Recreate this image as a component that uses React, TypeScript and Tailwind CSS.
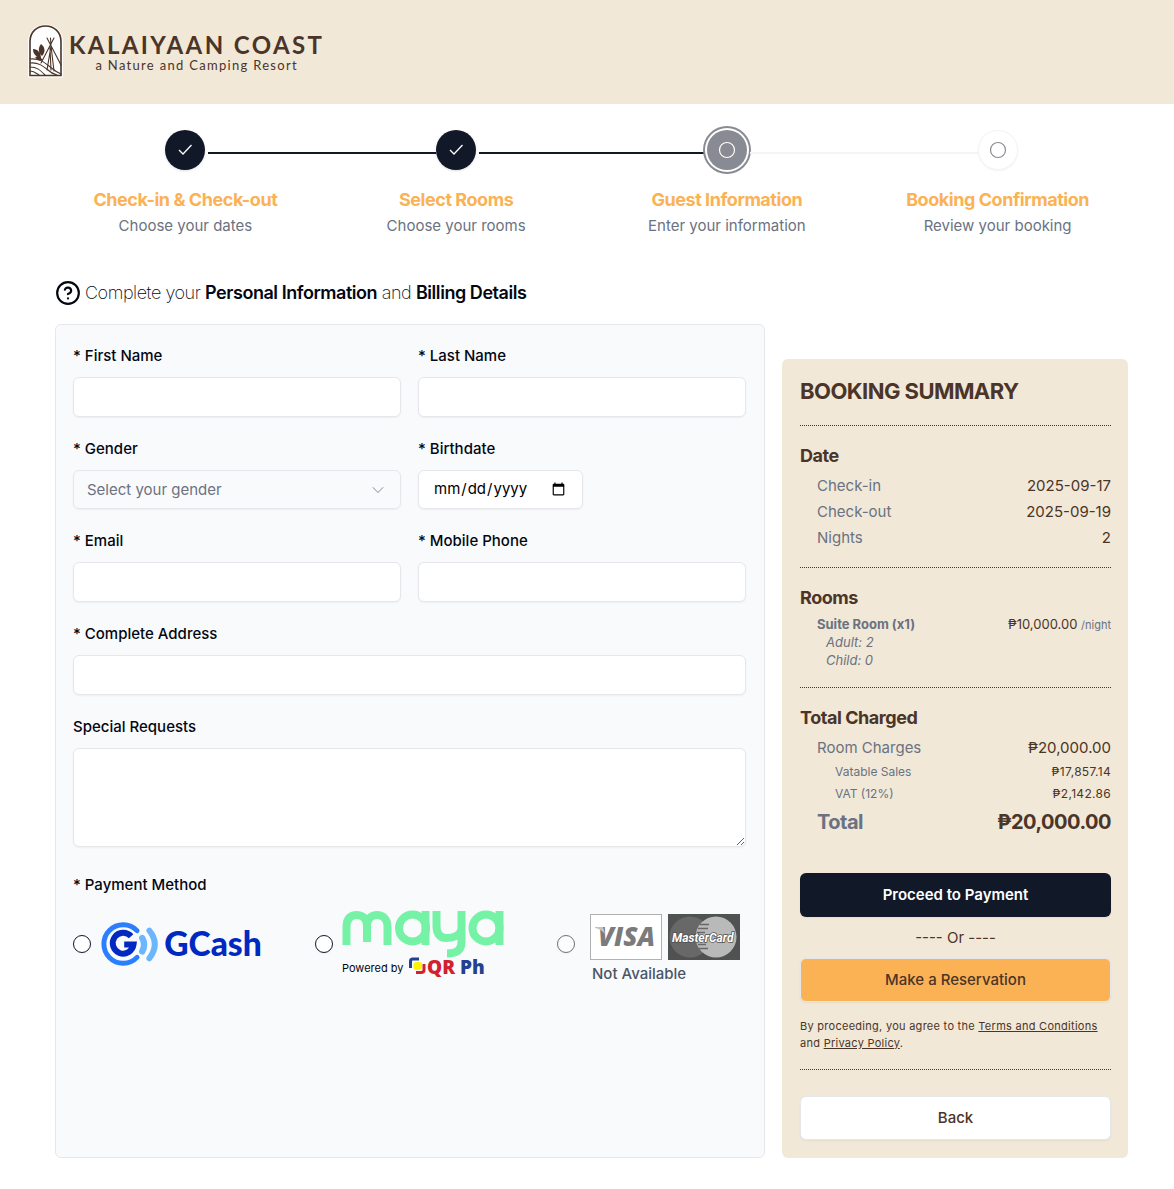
import React from "react";
import { ChevronDown, CircleHelp } from "lucide-react";

type StepState = "done" | "active" | "upcoming";

const steps: { title: string; description: string; state: StepState }[] = [
  { title: "Check-in & Check-out", description: "Choose your dates", state: "done" },
  { title: "Select Rooms", description: "Choose your rooms", state: "done" },
  { title: "Guest Information", description: "Enter your information", state: "active" },
  { title: "Booking Confirmation", description: "Review your booking", state: "upcoming" },
];

const circleStyles: Record<StepState, string> = {
  done: "bg-[#111827] text-white shadow-sm",
  active: "bg-[#888b93] text-white shadow-sm ring-2 ring-[#888b93] ring-offset-2",
  upcoming: "border border-gray-100 bg-white text-[#888b93] shadow-xs",
};

function ResortMark() {
  return (
    <svg width="36" height="54" viewBox="0 0 36 54" fill="none" aria-hidden="true">
      <path d="M0 53.500V17.500C0 7 8 .5 17.500 .5S35 7 35 17.500V53.500Z" fill="#fff" />
      <path d="M2 51.500V17.500C2 8 9 2 17.500 2S33 8 33 17.500V51.500Z" stroke="#4b3428" strokeWidth="1.600" />
      <g stroke="#4b3428" strokeWidth="1.100" strokeLinecap="round">
        <path d="M19 14 33 41M26 14 13 39M22.500 14 23 22 19 46M23 22 26 47M22 24 23 46" />
        <path d="M2 35c9-1 14 3 19 7s7 6 12 8M2 39c8-1 13 3 18 7 3 3 5 4 9 5M2 43c7 0 10 3 15 8M2 47c4 0 6 2 9 4" />
      </g>
      <path d="M13 20c4 3 5 8 1 12-4-4-4-8-1-12ZM5 25c5 0 8 4 8 9-5-1-8-4-8-9ZM7 33c3-1 6 0 8 3-4 1-6 0-8-3Z" fill="#4b3428" />
    </svg>
  );
}

function StepIcon({ state }: { state: StepState }) {
  return (
    <svg width="18" height="18" viewBox="0 0 18 18" fill="none" stroke="currentColor" aria-hidden="true">
      {state === "done" ? (
        <path d="M3 9 7 13 15.500 4" strokeWidth="1.300" />
      ) : (
        <circle cx="9" cy="9" r="7.500" strokeWidth="1.200" />
      )}
    </svg>
  );
}

function Stepper() {
  return (
    <ol className="grid grid-cols-4 pt-[26px] pr-[41px] pl-[50px] text-center">
      {steps.map((step, i) => (
        <li key={step.title} className="relative flex flex-col items-center">
          <button
            type="button"
            aria-label={step.title}
            className={`flex size-10 items-center justify-center rounded-full ${circleStyles[step.state]}`}
          >
            <StepIcon state={step.state} />
          </button>
          {i < steps.length - 1 && (
            <span
              className={`absolute top-[22px] right-[calc(-50%+20px)] left-[calc(50%+23px)] h-[2px] ${
                step.state === "done" ? "bg-[#111827]" : "bg-gray-100"
              }`}
            />
          )}
          <h2 className="mt-4 text-[18px] leading-7 font-bold tracking-tight text-[#fab255]">{step.title}</h2>
          <p className="text-[15px] leading-6 text-gray-500">{step.description}</p>
        </li>
      ))}
    </ol>
  );
}

const control = "h-10 w-full rounded-md border border-gray-200 bg-white px-[14px] text-[15px] shadow-xs";

function Field({ id, label, children }: { id: string; label: string; children: React.ReactNode }) {
  return (
    <div className="flex flex-col">
      <label htmlFor={id} className="mb-[7px] text-[15px] leading-7 font-medium text-gray-950">
        {label}
      </label>
      {children}
    </div>
  );
}

function GCashLogo() {
  return (
    <svg width="164" height="46" viewBox="0 0 164 46" fill="none" role="img" aria-label="GCash">
      <g strokeLinecap="round">
        <path d="M37.500 9.500A19.500 19.500 0 1 0 37.500 36.500" stroke="#2b7fff" strokeWidth="5" />
        <path d="M31.500 15.200A10.600 10.600 0 1 0 34 23.500H24.500" stroke="#0029c1" strokeWidth="6" strokeLinecap="butt" />
        <path d="M42.800 17Q46.500 23 42.800 30.500" stroke="#6cb6fb" strokeWidth="6.500" />
        <path d="M50 9.500Q61 23 50 37.500" stroke="#6cb6fb" strokeWidth="6" />
      </g>
      <text x="65" y="35" fontFamily="Lato, sans-serif" fontWeight="900" fontSize="34" fill="#0029c1">
        GCash
      </text>
    </svg>
  );
}

function MayaLogo() {
  return (
    <svg width="162" height="48" viewBox="0 0 162 48" fill="none" stroke="#75f2a6" strokeWidth="8" role="img" aria-label="maya">
      <path d="M4.500 35V17C4.500 8 9 5 14.500 5S25 8 25 16V32V16C25 8 30 5 35 5S45.500 8 45.500 17V35" />
      <circle cx="70.500" cy="18" r="13.500" />
      <path d="M83.500 1V35M94.500 1V16C94.500 25 99 28 104.500 28S119.500 26 119.500 18V1M119.500 14V32C119.500 40 115 43.500 105 43.500" />
      <circle cx="144" cy="18" r="13.500" />
      <path d="M157.500 1V35" />
    </svg>
  );
}

function QrPhLogo() {
  return (
    <svg width="80" height="28" viewBox="0 -4 80 28" fill="none" role="img" aria-label="QR Ph">
      <path d="M1.500 10V3Q1.500 1 4 1H10" stroke="#24418f" strokeWidth="3" />
      <path d="M15 6V12Q15 14.500 12 14.500H7" stroke="#d3202f" strokeWidth="3" />
      <rect x="4.500" y="4" width="8.500" height="8" rx="3" fill="#fff200" />
      <text x="18" y="16" fontFamily="Open Sans, sans-serif" fontWeight="800" fontSize="19" fill="#d3202f">QR</text>
      <text x="51" y="16" fontFamily="Open Sans, sans-serif" fontWeight="800" fontSize="19" fill="#24418f">Ph</text>
    </svg>
  );
}

function CardLogos() {
  return (
    <svg width="150" height="46" viewBox="0 0 150 46" role="img" aria-label="Visa and MasterCard">
      <rect x=".5" y=".5" width="71" height="45" fill="#fff" stroke="#b1b1b1" />
      <text x="8" y="32" fontFamily="Open Sans, sans-serif" fontWeight="800" fontStyle="italic" fontSize="26" fill="#7b7b7b">
        VISA
      </text>
      <path d="M5 13H13L15 20Q11 15 5 14Z" fill="#c4c4c4" />
      <rect x="78" width="72" height="46" fill="#505151" />
      <circle cx="100" cy="23" r="20.500" fill="#686868" />
      <circle cx="126" cy="23" r="20.500" fill="#b9b9b9" />
      <path d="M110 10.500H119M108 14.500H118M107 18.500H115M108 30.500H116M109 34.500H118" stroke="#686868" strokeWidth="1.500" />
      <text x="82" y="28" fontFamily="Roboto, sans-serif" fontWeight="700" fontStyle="italic" fontSize="12" fill="#fff" stroke="#505151" strokeWidth="1.500" paintOrder="stroke">
        MasterCard
      </text>
    </svg>
  );
}

const radio =
  "size-[18px] shrink-0 appearance-none rounded-full border border-gray-900 bg-white shadow-xs checked:border-[6px] disabled:opacity-60";

function GuestForm() {
  return (
    <form className="rounded-md border border-gray-200 bg-[#f9fafc] py-[17px] pr-[18px] pl-[17px]">
      <div className="grid grid-cols-2 gap-x-[17px] gap-y-[18px]">
        <Field id="first-name" label="* First Name">
          <input id="first-name" type="text" className={control} />
        </Field>
        <Field id="last-name" label="* Last Name">
          <input id="last-name" type="text" className={control} />
        </Field>
        <Field id="gender" label="* Gender">
          <div className="relative">
            <select
              id="gender"
              defaultValue=""
              className="block h-[39px] w-full appearance-none rounded-md border border-gray-200 bg-transparent px-[13px] pt-[2px] text-[15px] text-gray-500 shadow-xs"
            >
              <option value="">Select your gender</option>
              <option>Male</option>
              <option>Female</option>
            </select>
            <ChevronDown className="pointer-events-none absolute top-[10px] right-[13px] size-5 text-gray-400" strokeWidth={1.25} />
          </div>
        </Field>
        <Field id="birthdate" label="* Birthdate">
          <input
            id="birthdate"
            type="date"
            className="h-[39px] w-[165px] rounded-md border border-gray-200 bg-white px-[14px] text-[15px] text-black shadow-xs"
          />
        </Field>
        <Field id="email" label="* Email">
          <input id="email" type="email" className={control} />
        </Field>
        <Field id="phone" label="* Mobile Phone">
          <input id="phone" type="tel" className={control} />
        </Field>
        <div className="col-span-2">
          <Field id="address" label="* Complete Address">
            <input id="address" type="text" className={control} />
          </Field>
        </div>
        <div className="col-span-2">
          <Field id="requests" label="Special Requests">
            <textarea id="requests" className="h-[99px] w-full rounded-md border border-gray-200 bg-white p-3 text-[15px] shadow-xs" />
          </Field>
        </div>
      </div>

      <fieldset className="mt-6">
        <legend className="text-[15px] leading-7 font-medium text-gray-950">* Payment Method</legend>
        <div className="mt-[10px] grid grid-cols-3 gap-[53px]">
          <label className="flex h-[70px] items-center gap-[9px]">
            <input type="radio" name="payment" value="gcash" className={radio} />
            <GCashLogo />
          </label>
          <label className="flex h-[70px] items-center gap-[9px]">
            <input type="radio" name="payment" value="maya" className={radio} />
            <span className="flex flex-col">
              <MayaLogo />
              <span className="flex h-5 items-center gap-[6px] text-[11px] text-gray-950">
                Powered by <QrPhLogo />
              </span>
            </span>
          </label>
          <label className="flex h-[70px] items-center gap-[15px]">
            <input type="radio" name="payment" value="card" disabled className={radio} />
            <span className="flex flex-col pt-3">
              <CardLogos />
              <span className="pt-[2px] pl-[2px] text-[15px] leading-6 font-medium text-gray-600">Not Available</span>
            </span>
          </label>
        </div>
      </fieldset>
    </form>
  );
}

function Row({ label, value }: { label: string; value: string }) {
  return (
    <div className="flex justify-between pl-[17px] text-[15px] leading-[26px]">
      <dt className="text-gray-500">{label}</dt>
      <dd>{value}</dd>
    </div>
  );
}

function SmallRow({ label, value }: { label: string; value: string }) {
  return (
    <div className="flex justify-between pl-[35px] text-[12px] leading-[22px]">
      <dt className="text-gray-500">{label}</dt>
      <dd className="tracking-wide">{value}</dd>
    </div>
  );
}

const sectionTitle = "mb-[3px] text-[18px] leading-7 font-bold tracking-tight";
const rule = "my-4 border-t border-dotted border-[#4b3428]";

function BookingSummary() {
  return (
    <aside className="mt-[35px] flex flex-col rounded-md bg-[#f1e8d7] py-[18px] pr-[17px] pl-[18px] text-[#4b3428]">
      <h2 className="mb-1 text-[22px] leading-7 font-bold tracking-tight">BOOKING SUMMARY</h2>
      <hr className={rule} />
      <h3 className={sectionTitle}>Date</h3>
      <dl>
        <Row label="Check-in" value="2025-09-17" />
        <Row label="Check-out" value="2025-09-19" />
        <Row label="Nights" value="2" />
      </dl>
      <hr className={rule} />
      <h3 className={sectionTitle}>Rooms</h3>
      <div className="flex justify-between pb-[2px] pl-[17px] text-[13px] leading-[18px]">
        <div className="text-gray-500">
          <h4 className="font-bold">Suite Room (x1)</h4>
          <ul className="pl-[9px] italic">
            <li>Adult: 2</li>
            <li>Child: 0</li>
          </ul>
        </div>
        <p>
          ₱10,000.00 <span className="text-[11px] text-gray-500">/night</span>
        </p>
      </div>
      <hr className={rule} />
      <h3 className={sectionTitle}>Total Charged</h3>
      <dl>
        <Row label="Room Charges" value="₱20,000.00" />
        <SmallRow label="Vatable Sales" value="₱17,857.14" />
        <SmallRow label="VAT (12%)" value="₱2,142.86" />
        <div className="flex justify-between pl-[17px] text-[20px] leading-[34px] font-bold tracking-tight">
          <dt className="text-gray-500">Total</dt>
          <dd>₱20,000.00</dd>
        </div>
      </dl>
      <button type="button" className="mt-[34px] h-11 rounded-md bg-[#111827] text-[15px] font-semibold text-white shadow-xs">
        Proceed to Payment
      </button>
      <p className="py-2 text-center text-[15px] leading-[25px]">---- Or ----</p>
      <button type="button" className="h-11 rounded-md border border-gray-200 bg-[#fab255] text-[15px] font-medium shadow-xs">
        Make a Reservation
      </button>
      <p className="mt-4 pb-px text-[11px] leading-[17px] tracking-wide">
        By proceeding, you agree to the{" "}
        <a href="#terms" className="underline">Terms and Conditions</a> and{" "}
        <a href="#privacy" className="underline">Privacy Policy</a>.
      </p>
      <hr className={rule} />
      <button type="button" className="mt-[10px] h-11 rounded-md border border-gray-200 bg-white text-[15px] font-medium shadow-xs">
        Back
      </button>
    </aside>
  );
}

export default function App() {
  return (
    <div className="min-h-screen bg-white pb-[31px] font-['Inter',sans-serif] text-gray-950">
      <header className="flex h-[104px] items-center gap-[5px] bg-[#f1e8d7] px-7 pb-[2px]">
        <ResortMark />
        <div className="flex flex-col items-center pt-1 font-['Lato',sans-serif] text-[#4b3428]">
          <span className="text-[24px] leading-6 font-bold tracking-widest">KALAIYAAN COAST</span>
          <span className="text-[13px] leading-4 tracking-widest">a Nature and Camping Resort</span>
        </div>
      </header>
      <Stepper />
      <main className="mt-[42px] pr-[46px] pl-[55px]">
        <h1 className="flex items-center gap-1 text-[18px] leading-[26px] font-extralight tracking-tight">
          <CircleHelp className="size-[26px]" strokeWidth={2} />
          <span>
            Complete your <strong className="font-semibold">Personal Information</strong> and{" "}
            <strong className="font-semibold">Billing Details</strong>
          </span>
        </h1>
        <div className="mt-[18px] grid grid-cols-[710fr_346fr] gap-[17px]">
          <GuestForm />
          <BookingSummary />
        </div>
      </main>
    </div>
  );
}
